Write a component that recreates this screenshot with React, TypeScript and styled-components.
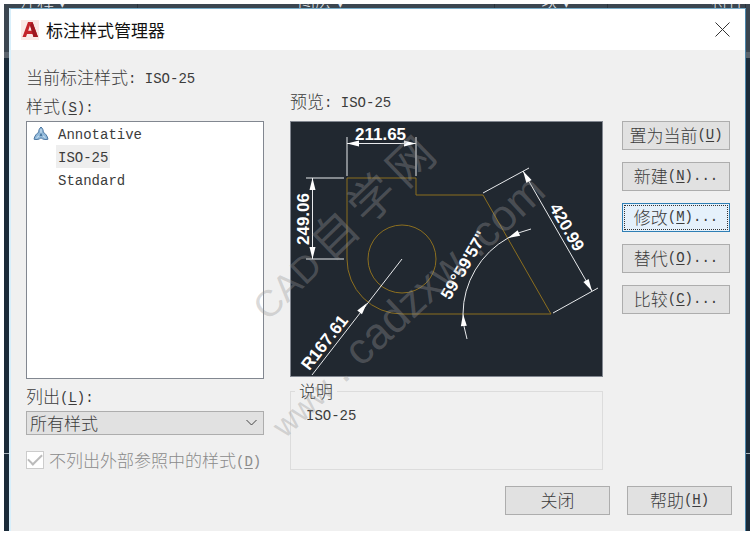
import React from "react";
import styled, { createGlobalStyle, css } from "styled-components";

const cjk = `"Noto Sans CJK SC", sans-serif`;

const GlobalStyle = createGlobalStyle`
  * { box-sizing: border-box; }
  body { margin: 0; background: #fff; }
  button, select, input { font: inherit; color: inherit; margin: 0; }
`;

const Page = styled.div`
  padding: 4px 4px 5px;
  font: 300 17px/24px ${cjk};
  color: #3c3c3c;
`;

const Workspace = styled.div`
  padding: 0 4px 0 5px;
  background: linear-gradient(
    #3b4650 0 48px,
    #5a636c 48px 54px,
    #1b2b39 54px 449px,
    #a9b3ba 449px 450px,
    #1b2b39 450px 100%
  );
`;

const Ribbon = styled.div`
  display: grid;
  grid-template-columns: 129fr 357fr 113fr 138fr;
  height: 4px;
  overflow: hidden;
  color: #e3e7ea;
`;

const RibbonLabel = styled.span<{ $align?: string }>`
  display: flex;
  align-items: flex-end;
  justify-content: ${(p) => p.$align ?? "center"};
  height: 4px;
  padding-left: 11px;
  font-size: 17px;
  line-height: 14px;
  border-right: 1px solid #2b343c;
`;

const Dialog = styled.main`
  position: relative;
  overflow: hidden;
  background: #f0f0f0;
  border-top: 1px solid #79aecb;
  border-right: 1px solid #4b86ab;
  border-left: 2px solid #d8effb;
`;

const TitleBar = styled.header`
  display: flex;
  align-items: center;
  gap: 7px;
  height: 41px;
  padding: 0 15px 0 10px;
  background: #fff;
`;

const Title = styled.h1`
  flex: 1;
  margin: 0;
  font-size: 17px;
  font-weight: 400;
  color: #111;
`;

const CloseButton = styled.button`
  display: flex;
  padding: 0;
  border: 0;
  background: none;
`;

const Body = styled.div`
  padding: 15px 15px 0;
`;

const Current = styled.p`
  margin: 0;
`;

const Latin = styled.span`
  font: 400 14px/20px "Liberation Mono", monospace;
  vertical-align: 1px;
  white-space: pre;
  u { text-underline-offset: 2px; }
`;

const Columns = styled.div`
  display: flex;
  align-items: flex-start;
`;

const StylesColumn = styled.section`
  flex: 238 1 0;
  min-width: 0;
  padding-top: 5px;
`;

const PreviewColumn = styled.section`
  flex: 313 1 0;
  min-width: 0;
  margin-left: 26px;
`;

const Actions = styled.div`
  display: flex;
  flex-direction: column;
  gap: 12px;
  width: 108px;
  margin: 32px 0 0 19px;
`;

const FieldLabel = styled.label`
  display: block;
  height: 27px;
`;

const PreviewLabel = styled.h2`
  height: 32px;
  margin: 0;
  font: inherit;
`;

const StyleList = styled.ul`
  height: 258px;
  margin: 0 0 5px;
  padding: 0 0 0 6px;
  list-style: none;
  background: #fff;
  border: 1px solid #828790;
`;

const StyleItem = styled.li`
  display: flex;
  align-items: center;
  height: 23px;
`;

const IconSlot = styled.span`
  display: flex;
  width: 23px;
`;

const StyleName = styled.span<{ $selected?: boolean }>`
  padding: 0 2px;
  line-height: 22px;
  background: ${(p) => (p.$selected ? "#eeeeee" : "transparent")};
`;

const SelectBox = styled.div`
  position: relative;
  height: 24px;
  svg { position: absolute; right: 7px; top: 8px; pointer-events: none; }
`;

const Select = styled.select`
  display: block;
  appearance: none;
  width: 100%;
  height: 24px;
  padding: 0 3px;
  line-height: 22px;
  background: #e1e1e1;
  border: 1px solid #adadad;
  border-radius: 0;
`;

const CheckLabel = styled.label`
  display: flex;
  align-items: center;
  gap: 5px;
  margin-top: 13px;
  color: #8b8b8b;
  white-space: nowrap;
`;

const CheckBox = styled.input`
  appearance: none;
  width: 18px;
  height: 18px;
  background: #fff;
  border: 1px solid #ccc;
  display: grid;
  place-items: center;
  &:checked::after {
    content: "";
    width: 12px;
    height: 6px;
    margin-bottom: 4px;
    border: solid #bbb;
    border-width: 0 0 2px 2px;
    transform: rotate(-45deg);
  }
`;

const Preview = styled.div`
  background: #212830;
  border: 1px solid #828790;
  svg { display: block; width: 100%; height: auto; }
`;

const Description = styled.fieldset`
  height: 91px;
  margin: 2px 0 0;
  padding: 0 4px;
  border: 1px solid #dcdcdc;
`;

const Legend = styled.legend`
  padding: 0 4px;
`;

const DescriptionText = styled.p`
  margin: 0;
  padding-left: 11px;
  line-height: 22px;
`;

const Button = styled.button<{ $focused?: boolean; $wide?: boolean }>`
  display: flex;
  align-items: center;
  justify-content: center;
  width: ${(p) => (p.$wide ? "105px" : "auto")};
  height: 29px;
  padding: 0 0 2px;
  background: #e1e1e1;
  border: 1px solid #adadad;
  white-space: nowrap;
  ${(p) =>
    p.$focused &&
    css`
      background: #e5f1fb;
      border-color: #2f7fb5;
      outline: 1px dotted #333;
      outline-offset: -3px;
    `}
`;

const Footer = styled.footer`
  display: flex;
  justify-content: flex-end;
  gap: 17px;
  padding: 14px 13px 16px;
`;

const Watermark = styled.svg`
  position: absolute;
  top: 120px;
  left: 235px;
  pointer-events: none;
  fill: rgba(150, 150, 150, 0.36);
  font-family: "Liberation Sans", ${cjk};
  font-weight: 400;
`;

const DimText = styled.text`
  font: 700 17px "Liberation Sans", sans-serif;
  fill: #fff;
`;

function Key({ k, tail = "" }: { k: string; tail?: string }) {
  return (
    <Latin>
      (<u>{k}</u>){tail}
    </Latin>
  );
}

function Arrow({ x, y, angle }: { x: number; y: number; angle: number }) {
  return <path d="M0 0L-12 -3V3Z" fill="#fff" transform={`translate(${x} ${y}) rotate(${angle})`} />;
}

function AppLogo() {
  return (
    <svg width="18" height="20" viewBox="0 0 18 20" aria-hidden="true">
      <path d="M0 0H18V20H0Z" fill="#fae9e6" />
      <path d="M1.5 17L7 2H11.5L17 17H12.5L11.6 14H6L5 17ZM7.2 10.8H10.8L9 5.3Z" fill="#c4242b" fillRule="evenodd" />
      <path d="M11.5 2L17 17H12.5L9 5.3Z" fill="#9f1820" />
    </svg>
  );
}

function AnnotativeIcon() {
  return (
    <svg width="16" height="15" viewBox="0 0 16 15" aria-hidden="true">
      <path
        d="M8 1C9.4 2.3 10.6 4.1 10.2 6.2C12.6 7.6 14.4 10 15 13.2C12.2 14 9.8 13.4 8 11.8C6.2 13.4 3.8 14 1 13.2C1.6 10 3.4 7.6 5.8 6.2C5.4 4.1 6.6 2.3 8 1Z"
        fill="#8fb8da"
        stroke="#4f79a3"
      />
      <path d="M8 3V8L3.5 12M8 8L12.5 12" fill="none" stroke="#d3e6f4" />
      <path d="M8 6.5L9.7 10H6.3Z" fill="#47769f" />
    </svg>
  );
}

function Drawing() {
  return (
    <svg viewBox="1 1 311 254" role="img" aria-label="ISO-25">
      <g fill="none" stroke="#8c6f1f">
        <path d="M57 138V57H126V74H193L261 193H112A55 55 0 0 1 57 138Z" />
        <circle cx="112" cy="138" r="34" />
      </g>
      <g fill="none" stroke="#e8eaec">
        <path d="M57 16V55M126 16V55M57 22.5H126M16 57H54M16 138H54M22.5 57V138" />
        <path d="M112 138L22 254" />
        <path d="M193 72L239 47M263 192L308 167M233 50L302 170" />
        <path d="M241 108A88 88 0 0 0 218 117A88 88 0 0 0 173 193A88 88 0 0 0 177 218" />
      </g>
      <Arrow x={57} y={22.5} angle={180} />
      <Arrow x={126} y={22.5} angle={0} />
      <Arrow x={22.5} y={57} angle={-90} />
      <Arrow x={22.5} y={138} angle={90} />
      <Arrow x={77} y={182} angle={-52} />
      <Arrow x={233} y={50} angle={-120} />
      <Arrow x={302} y={170} angle={60} />
      <Arrow x={218} y={117} angle={155} />
      <Arrow x={173} y={193} angle={-94} />
      <DimText x="65" y="19">211.65</DimText>
      <DimText transform="translate(19 124) rotate(-90)">249.06</DimText>
      <DimText textAnchor="middle" transform="translate(272 109) rotate(60)">420.99</DimText>
      <DimText textAnchor="middle" transform="translate(179 147) rotate(-60)">59°59'57"</DimText>
      <DimText textAnchor="middle" transform="translate(39 225) rotate(-52)">R167.61</DimText>
    </svg>
  );
}

export default function App() {
  return (
    <>
      <GlobalStyle />
      <Page>
        <Workspace>
          <Ribbon aria-hidden="true">
            <RibbonLabel $align="flex-start">注释 ▾</RibbonLabel>
            <RibbonLabel>图层 ▾</RibbonLabel>
            <RibbonLabel>块 ▾</RibbonLabel>
            <RibbonLabel $align="flex-end">特性</RibbonLabel>
          </Ribbon>
          <Dialog>
            <TitleBar>
              <AppLogo />
              <Title>标注样式管理器</Title>
              <CloseButton aria-label="关闭">
                <svg width="15" height="15" viewBox="0 0 15 15">
                  <path d="M0.5 0.5L14.5 14.5M14.5 0.5L0.5 14.5" stroke="#333" />
                </svg>
              </CloseButton>
            </TitleBar>
            <Body>
              <Current>
                当前标注样式<Latin>: ISO-25</Latin>
              </Current>
              <Columns>
                <StylesColumn>
                  <FieldLabel as="div" id="styles-label">
                    样式<Key k="S" tail=":" />
                  </FieldLabel>
                  <StyleList role="listbox" aria-labelledby="styles-label">
                    <StyleItem role="option" aria-selected="false">
                      <IconSlot>
                        <AnnotativeIcon />
                      </IconSlot>
                      <StyleName>
                        <Latin>Annotative</Latin>
                      </StyleName>
                    </StyleItem>
                    <StyleItem role="option" aria-selected="true">
                      <IconSlot />
                      <StyleName $selected>
                        <Latin>ISO-25</Latin>
                      </StyleName>
                    </StyleItem>
                    <StyleItem role="option" aria-selected="false">
                      <IconSlot />
                      <StyleName>
                        <Latin>Standard</Latin>
                      </StyleName>
                    </StyleItem>
                  </StyleList>
                  <FieldLabel htmlFor="filter">
                    列出<Key k="L" tail=":" />
                  </FieldLabel>
                  <SelectBox>
                    <Select id="filter">
                      <option>所有样式</option>
                    </Select>
                    <svg width="11" height="8" viewBox="0 0 11 8" aria-hidden="true">
                      <path d="M0.5 1L5.5 6L10.5 1" fill="none" stroke="#444" />
                    </svg>
                  </SelectBox>
                  <CheckLabel>
                    <CheckBox type="checkbox" defaultChecked disabled />
                    <span>
                      不列出外部参照中的样式<Key k="D" />
                    </span>
                  </CheckLabel>
                </StylesColumn>
                <PreviewColumn>
                  <PreviewLabel>
                    预览<Latin>: ISO-25</Latin>
                  </PreviewLabel>
                  <Preview>
                    <Drawing />
                  </Preview>
                  <Description>
                    <Legend>说明</Legend>
                    <DescriptionText>
                      <Latin>ISO-25</Latin>
                    </DescriptionText>
                  </Description>
                </PreviewColumn>
                <Actions>
                  <Button>置为当前<Key k="U" /></Button>
                  <Button>新建<Key k="N" tail="..." /></Button>
                  <Button $focused>修改<Key k="M" tail="..." /></Button>
                  <Button>替代<Key k="O" tail="..." /></Button>
                  <Button>比较<Key k="C" tail="..." /></Button>
                </Actions>
              </Columns>
            </Body>
            <Footer>
              <Button $wide>关闭</Button>
              <Button $wide>帮助<Key k="H" /></Button>
            </Footer>
            <Watermark width="320" height="330" viewBox="246 129 320 330" aria-hidden="true">
              <g transform="translate(268 322) rotate(-44)">
                <text fontSize="37">CAD</text>
                <g fontSize="46">
                  <text x="85">自</text>
                  <text x="138">学</text>
                  <text x="191">网</text>
                </g>
              </g>
              <g transform="translate(285 439) rotate(-43)" fontSize="44">
                <text fontSize="32">www</text>
                <text x="80">.</text>
                <text x="104">cadzxw</text>
                <text x="264">.com</text>
              </g>
            </Watermark>
          </Dialog>
        </Workspace>
      </Page>
    </>
  );
}
